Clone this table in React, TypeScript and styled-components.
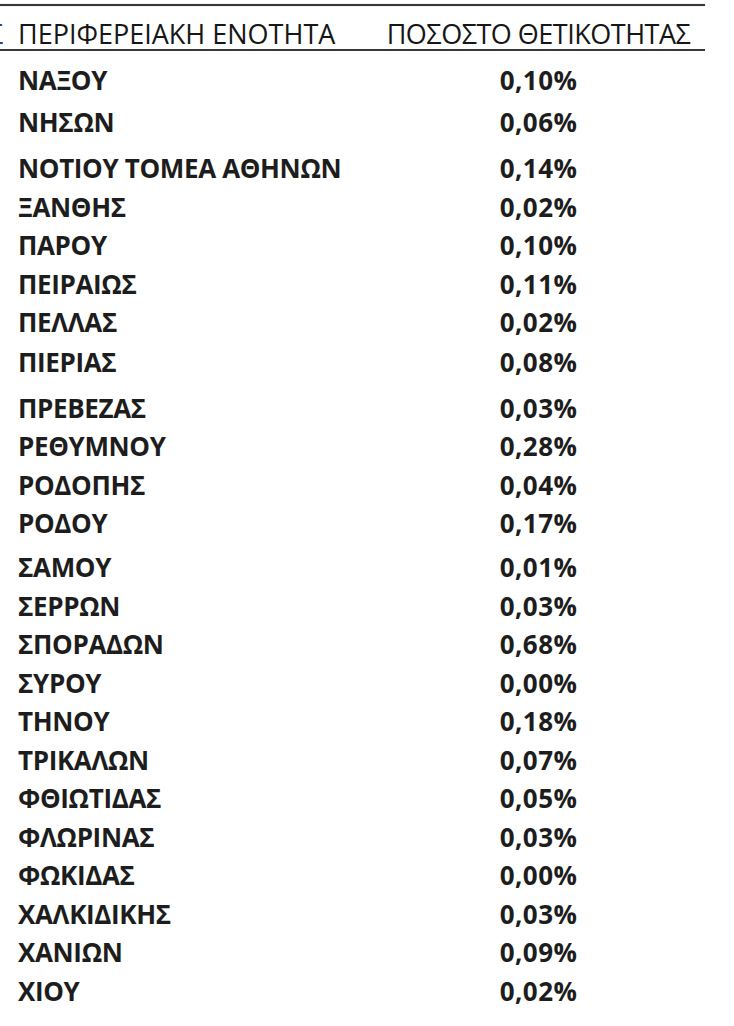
import React from 'react'
import styled, {createGlobalStyle} from 'styled-components'

const GlobalStyle = createGlobalStyle`
  html, body {
    margin: 0;
    padding: 0;
    background: #ffffff;
  }
  body {
    font-family: 'Open Sans', 'Noto Sans', 'DejaVu Sans', sans-serif;
    color: #1d1d1d;
  }
`

type Row = {
  area: string
  rate: string
  // distance to the next row's centre line, px
  h?: number
}

const ROWS: Row[] = [
  {area: 'ΝΑΞΟΥ', rate: '0,10%', h: 42},
  {area: 'ΝΗΣΩΝ', rate: '0,06%', h: 46},
  {area: 'ΝΟΤΙΟΥ ΤΟΜΕΑ ΑΘΗΝΩΝ', rate: '0,14%'},
  {area: 'ΞΑΝΘΗΣ', rate: '0,02%'},
  {area: 'ΠΑΡΟΥ', rate: '0,10%'},
  {area: 'ΠΕΙΡΑΙΩΣ', rate: '0,11%'},
  {area: 'ΠΕΛΛΑΣ', rate: '0,02%', h: 39.5},
  {area: 'ΠΙΕΡΙΑΣ', rate: '0,08%', h: 46},
  {area: 'ΠΡΕΒΕΖΑΣ', rate: '0,03%'},
  {area: 'ΡΕΘΥΜΝΟΥ', rate: '0,28%'},
  {area: 'ΡΟΔΟΠΗΣ', rate: '0,04%'},
  {area: 'ΡΟΔΟΥ', rate: '0,17%', h: 44},
  {area: 'ΣΑΜΟΥ', rate: '0,01%'},
  {area: 'ΣΕΡΡΩΝ', rate: '0,03%'},
  {area: 'ΣΠΟΡΑΔΩΝ', rate: '0,68%'},
  {area: 'ΣΥΡΟΥ', rate: '0,00%'},
  {area: 'ΤΗΝΟΥ', rate: '0,18%'},
  {area: 'ΤΡΙΚΑΛΩΝ', rate: '0,07%'},
  {area: 'ΦΘΙΩΤΙΔΑΣ', rate: '0,05%'},
  {area: 'ΦΛΩΡΙΝΑΣ', rate: '0,03%'},
  {area: 'ΦΩΚΙΔΑΣ', rate: '0,00%'},
  {area: 'ΧΑΛΚΙΔΙΚΗΣ', rate: '0,03%'},
  {area: 'ΧΑΝΙΩΝ', rate: '0,09%'},
  {area: 'ΧΙΟΥ', rate: '0,02%'},
]

const Sheet = styled.div`
  width: 705px;
  padding-top: 4px;
  background: #ffffff;
`

/* thick double-ish rule above the header band */
const TopRule = styled.div`
  height: 2px;
  background: #383838;
  box-shadow: 0 0 1px rgba(0, 0, 0, 0.5);
`

const Table = styled.div`
  display: flex;
  flex-direction: column;
`

const Columns = styled.div`
  display: grid;
  grid-template-columns: 372px 333px;
`

const HeaderRow = styled(Columns)`
  box-sizing: content-box;
  height: 34px;
  padding-top: 9px;
  align-items: center;
  border-bottom: 2px solid #383838;
  font-size: 27px;
  font-weight: 400;
  color: #161616;
`

const HeadLeft = styled.div`
  display: flex;
  align-items: center;
  gap: 14px;
  white-space: nowrap;
`

/* sliver of the neighbouring column's label, cut off at the page edge */
const Clipped = styled.span`
  width: 4px;
  overflow: hidden;
  display: inline-block;
  color: #2c3f7a;

  & > span {
    display: inline-block;
    margin-left: -12px;
  }
`

const HeadRight = styled.div`
  text-align: center;
  white-space: nowrap;
  letter-spacing: -0.5px;
`

const Body = styled.div`
  display: flex;
  flex-direction: column;
  padding-top: 10px;
`

const DataRow = styled(Columns)<{$h: number}>`
  height: ${(p) => p.$h}px;
  align-items: start;
  font-size: 26px;
  font-weight: 700;
  line-height: 38px;
`

const Area = styled.div`
  padding-left: 18px;
  white-space: nowrap;
  letter-spacing: -0.35px;
`

const Rate = styled.div`
  text-align: center;
  letter-spacing: 0.4px;
`

export default function App() {
  return (
    <Sheet>
      <GlobalStyle />
      <Table>
        <TopRule />
        <HeaderRow>
          <HeadLeft>
            <Clipped>
              <span>Σ</span>
            </Clipped>
            <span>ΠΕΡΙΦΕΡΕΙΑΚΗ ΕΝΟΤΗΤΑ</span>
          </HeadLeft>
          <HeadRight>ΠΟΣΟΣΤΟ ΘΕΤΙΚΟΤΗΤΑΣ</HeadRight>
        </HeaderRow>
        <Body>
          {ROWS.map((r) => (
            <DataRow key={r.area} $h={r.h ?? 38.5}>
              <Area>{r.area}</Area>
              <Rate>{r.rate}</Rate>
            </DataRow>
          ))}
        </Body>
      </Table>
    </Sheet>
  )
}
